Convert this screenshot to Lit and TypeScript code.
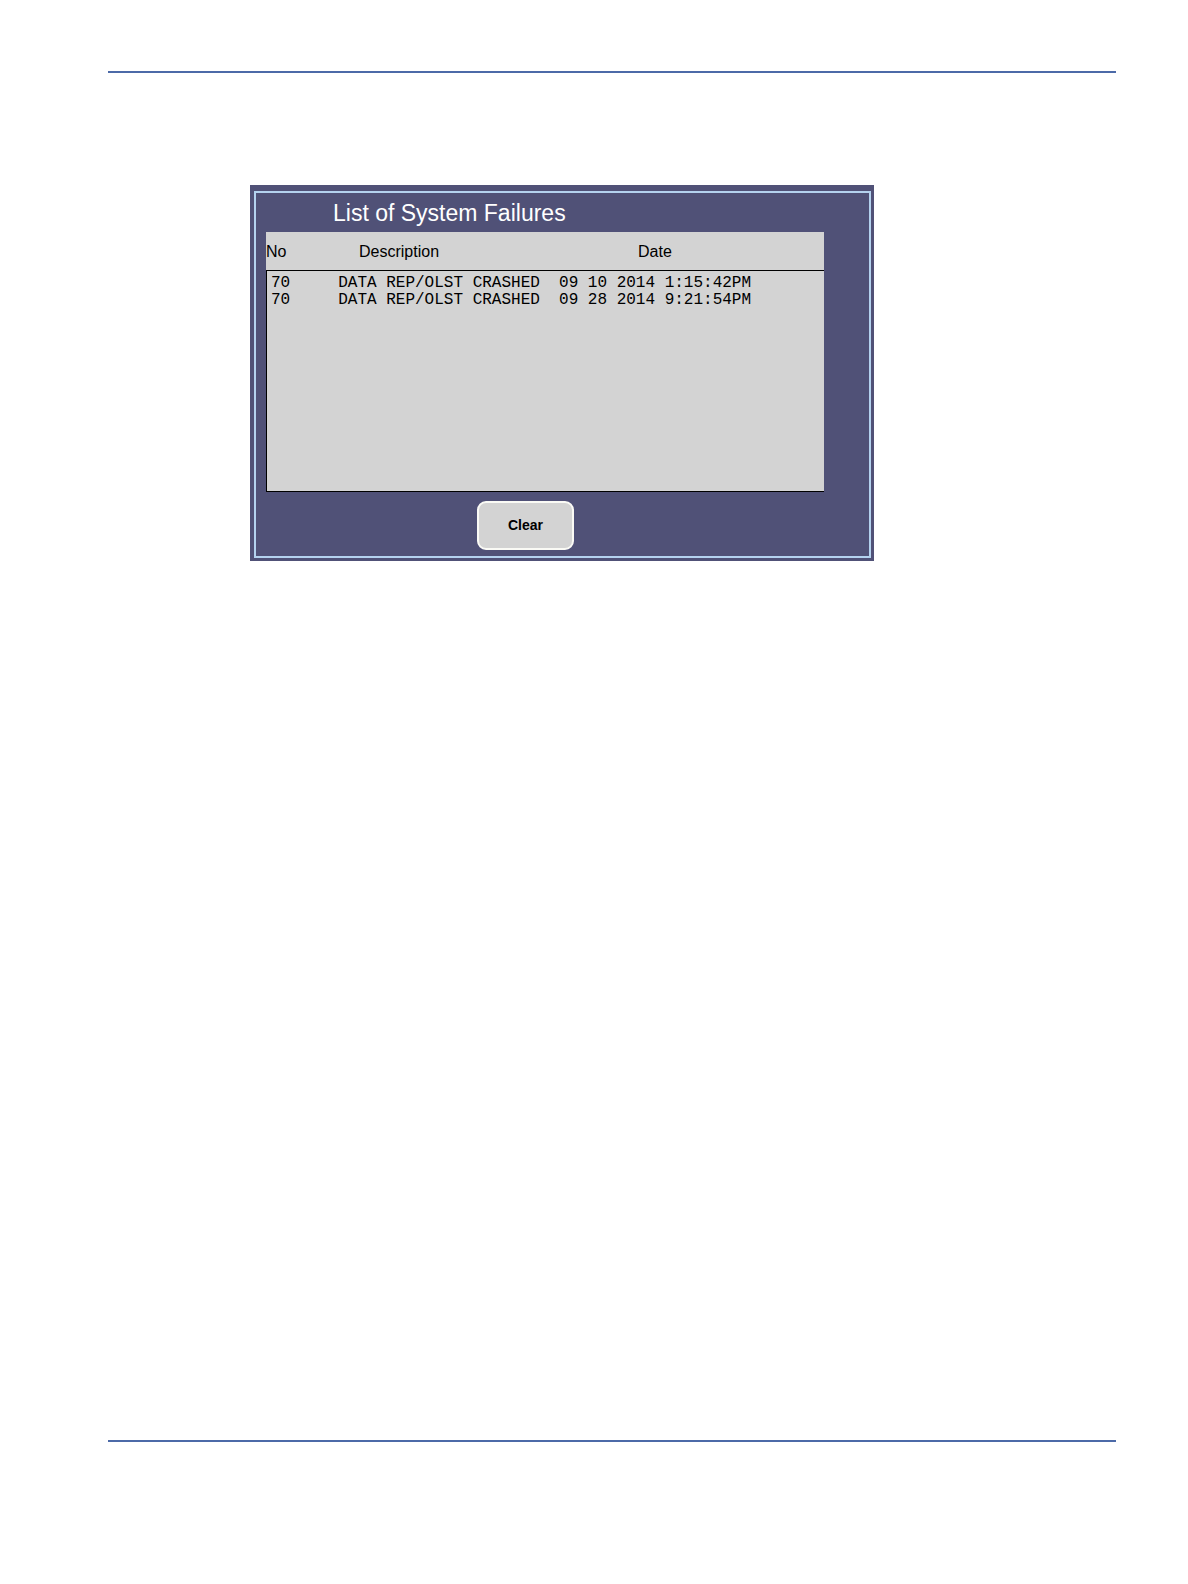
import { LitElement, html, css } from "lit";
import { customElement, state } from "lit/decorators.js";

interface Failure {
  no: string;
  description: string;
  date: string;
}

@customElement("failure-panel")
export class FailurePanel extends LitElement {
  static styles = css`
    :host {
      display: block;
      box-sizing: border-box;
      padding: 6px 3px 3px 4px;
      background: #505177;
      color: #000;
      font-family: "Liberation Sans", Arial, sans-serif;
    }
    .frame {
      display: flex;
      flex-direction: column;
      padding: 7px 45px 6px 10px;
      border: 2px solid #b4d2ef;
    }
    .title {
      margin: 0;
      padding: 0 0 6px 67px;
      color: #fff;
      font-size: 23px;
      font-weight: 400;
      line-height: 26px;
    }
    .list,
    .head {
      display: block;
    }
    .body {
      display: block;
      box-sizing: border-box;
      min-height: 222px;
      padding: 4px;
      border: solid #000;
      border-width: 1px 0 1px 1px;
      background: #d3d3d3;
      font: 16px/17px "Liberation Mono", "Courier New", monospace;
    }
    .row {
      display: grid;
      grid-template-columns: 7ch 23ch 1fr;
    }
    .head .row {
      grid-template-columns: 1fr 3fr 2fr;
      padding-top: 2px;
      background: #d3d3d3;
      font-size: 16px;
      line-height: 36px;
    }
    th,
    td {
      padding: 0;
      font-weight: 400;
      text-align: left;
      white-space: nowrap;
    }
    .clear {
      align-self: center;
      width: 97px;
      height: 49px;
      margin: 9px 39px 0 0;
      padding: 0 0 2px;
      border: 2px solid #fafaf5;
      border-radius: 9px;
      background: #d3d3d3;
      color: #000;
      font: bold 14px "Liberation Sans", Arial, sans-serif;
      cursor: pointer;
    }
  `;

  @state() private failures: Failure[] = [
    { no: "70", description: "DATA REP/OLST CRASHED", date: "09 10 2014 1:15:42PM" },
    { no: "70", description: "DATA REP/OLST CRASHED", date: "09 28 2014 9:21:54PM" },
  ];

  private clear() {
    this.failures = [];
  }

  render() {
    return html`
      <section class="frame" aria-labelledby="title">
        <h1 class="title" id="title">List of System Failures</h1>
        <table class="list" aria-labelledby="title">
          <thead class="head">
            <tr class="row">
              <th scope="col">No</th>
              <th scope="col">Description</th>
              <th scope="col">Date</th>
            </tr>
          </thead>
          <tbody class="body">
            ${this.failures.map(
              (f) => html`<tr class="row">
                <td>${f.no}</td>
                <td>${f.description}</td>
                <td>${f.date}</td>
              </tr>`
            )}
          </tbody>
        </table>
        <button class="clear" type="button" @click=${this.clear}>Clear</button>
      </section>
    `;
  }
}

@customElement("app-root")
export class AppRoot extends LitElement {
  static styles = css`
    :host {
      display: flex;
      flex-direction: column;
      box-sizing: border-box;
      min-height: 100vh;
      padding: 71px 72px 142px 108px;
      background: #fff;
    }
    .rule {
      width: 100%;
      height: 2px;
      margin: 0;
      border: 0;
      background: #4c6aa8;
    }
    .content {
      flex: 1;
      padding: 112px 0 0 142px;
    }
    .panel {
      max-width: 624px;
    }
  `;

  render() {
    return html`
      <hr class="rule" />
      <main class="content">
        <failure-panel class="panel"></failure-panel>
      </main>
      <hr class="rule" />
    `;
  }
}
